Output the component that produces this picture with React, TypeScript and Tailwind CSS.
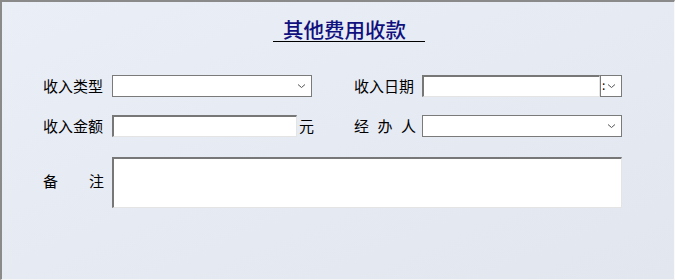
import { ReactNode } from "react";

const cjk = { fontFamily: '"Noto Sans CJK SC", "Liberation Sans", sans-serif' };

function Chevron() {
  return (
    <svg width="9" height="6" viewBox="0 0 9 6" className="shrink-0">
      <path d="M1 1.5 L4.5 4.5 L8 1.5" fill="none" stroke="#555" strokeWidth="1" />
    </svg>
  );
}

function Label({ children, spread }: { children: ReactNode; spread?: boolean }) {
  return (
    <div className="w-[69px] shrink-0">
      <div
        className={
          spread
            ? "flex w-[61px] justify-between text-[15px] leading-5 text-black"
            : "text-[15px] leading-5 text-black"
        }
      >
        {children}
      </div>
    </div>
  );
}

function Select({ width }: { width: string }) {
  return (
    <div
      className={`${width} flex h-[22px] items-center justify-end border border-[#7a7a7a] bg-white pr-[5px]`}
    >
      <Chevron />
    </div>
  );
}

export default function App() {
  return (
    <div
      className="h-[280px] w-[675px] overflow-hidden border-t-2 border-l-2 border-r border-b border-t-[#8a8a8a] border-l-[#8a8a8a] border-r-[#fafafa] border-b-[#f4f4f4] bg-gradient-to-br from-[#eaeef7] to-[#e2e6ef]"
      style={cjk}
    >
      {/* title */}
      <div className="ml-[271px] mt-[15px] w-[152px] border-b border-black pl-[10px] text-[20.5px] font-medium leading-6 text-[#10107e]">
        其他费用收款
      </div>

      <div className="flex flex-col pl-[41px] pt-[33px]">
        {/* row 1 */}
        <div className="flex items-center">
          <Label>收入类型</Label>
          <Select width="w-[200px]" />
          <div className="w-[42px] shrink-0" />
          <div className="w-[68px] shrink-0 text-[15px] leading-5 text-black">收入日期</div>
          <div className="flex h-[22px] w-[200px] items-stretch">
            <div className="w-[178px] border-t-2 border-l-2 border-r border-b border-t-[#777] border-l-[#777] border-r-[#e4e4e4] border-b-[#e4e4e4] bg-white" />
            <div className="flex w-[22px] items-center border border-[#7a7a7a] bg-white pl-[1px] text-[12px] leading-none text-black">
              <span className="mr-[2px] -mt-[2px]">:</span>
              <Chevron />
            </div>
          </div>
        </div>

        {/* row 2 */}
        <div className="mt-[18px] flex items-center">
          <Label>收入金额</Label>
          <div className="h-[22px] w-[185px] border-t-2 border-l-2 border-r border-b border-t-[#777] border-l-[#777] border-r-[#e4e4e4] border-b-[#e4e4e4] bg-white" />
          <div className="ml-[2px] w-[13px] text-[15px] leading-5 text-black">元</div>
          <div className="w-[42px] shrink-0" />
          <div className="w-[68px] shrink-0">
            <div className="flex w-[62px] justify-between text-[15px] leading-5 text-black">
              <span>经</span>
              <span>办</span>
              <span>人</span>
            </div>
          </div>
          <Select width="w-[200px]" />
        </div>

        {/* row 3 */}
        <div className="mt-[20px] flex items-start">
          <div className="w-[69px] shrink-0 pt-[14px]">
            <div className="flex w-[61px] justify-between text-[15px] leading-5 text-black">
              <span>备</span>
              <span>注</span>
            </div>
          </div>
          <div className="h-[51px] w-[510px] border-t-2 border-l-2 border-r border-b border-t-[#777] border-l-[#777] border-r-[#e4e4e4] border-b-[#e4e4e4] bg-white" />
        </div>
      </div>
    </div>
  );
}
